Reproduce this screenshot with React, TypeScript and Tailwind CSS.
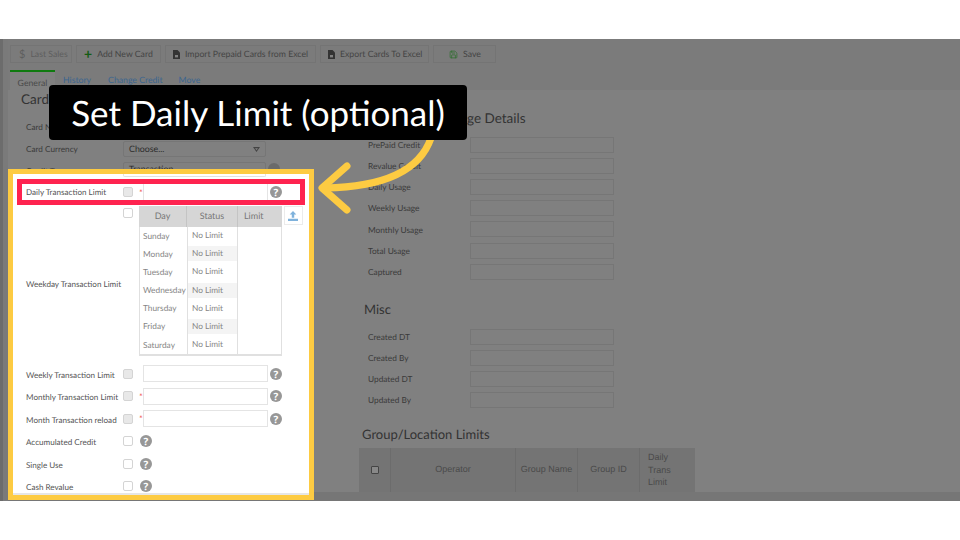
import { Save } from "lucide-react";

const font = "font-['Lato','Noto_Sans',sans-serif] [text-rendering:geometricPrecision]";

function Help({ className = "" }: { className?: string }) {
  return (
    <span className={`flex h-[12px] w-[12px] shrink-0 items-center justify-center rounded-full bg-[#979797] font-['Open_Sans',sans-serif] text-[10px] leading-none font-bold text-white ${className}`}>?</span>
  );
}

function Check({ filled = false }: { filled?: boolean }) {
  return <span className={`block h-[10px] w-[10px] shrink-0 rounded-[2px] border border-[#d4d4d4] ${filled ? "bg-[#e8e8e8]" : "bg-white"}`} />;
}

function ToolButton({ children, width, dim = false }: { children: React.ReactNode; width: string; dim?: boolean }) {
  return (
    <div className={`flex h-[18px] items-center border border-[#747474] text-[8.7px] leading-none whitespace-nowrap ${width} ${dim ? "text-[#5e5e5e]" : "text-[#444]"}`}>{children}</div>
  );
}

function FileIcon() {
  return (
    <svg width="7" height="9" viewBox="0 0 7 9"><path d="M0 0h4.5L7 2.5V9H0z" fill="#333" /><path d="M2 5h3v2.4H2z" fill="#808080" /></svg>
  );
}

function LimitRow({ label, star = false }: { label: string; star?: boolean }) {
  return (
    <div className="flex h-[22.5px] items-center">
      <span className="w-[97px] pt-[2px] text-[8.1px] whitespace-nowrap text-[#555]">{label}</span>
      <Check filled />
      <span className="w-[10px] pl-[6px] text-[9px] leading-none text-[#ef5555]">{star ? "*" : ""}</span>
      <span className="h-[17px] w-[125px] border border-[#e4e4e4] bg-white" />
      <Help className="ml-[2px]" />
    </div>
  );
}

function CheckRow({ label }: { label: string }) {
  return (
    <div className="flex h-[22.5px] items-center">
      <span className="w-[97px] pt-[2px] text-[8.1px] text-[#555]">{label}</span>
      <Check />
      <Help className="ml-[7px]" />
    </div>
  );
}

function DimRow({ label }: { label: string }) {
  return (
    <div className="flex h-[21.2px] items-center pl-[9px]">
      <span className="w-[102px] pt-[1px] text-[8.3px] text-[#3a3a3a]">{label}</span>
      <span className="h-[16px] w-[144px] border border-[#767676]" />
    </div>
  );
}

const days = [
  ["Sunday", false], ["Monday", true], ["Tuesday", false], ["Wednesday", true],
  ["Thursday", false], ["Friday", true], ["Saturday", false],
] as const;

export default function App() {
  return (
    <div className={`relative flex h-[540px] w-[960px] flex-col overflow-hidden bg-white ${font}`}>
      <div className="h-[39px] shrink-0" />
      <div className="relative h-[462px] shrink-0 overflow-hidden bg-[#808080]">
        <div className="bg-[#7b7b7b]">
          <div className="flex gap-[4px] pt-[6px] pl-[10px]">
            <ToolButton width="w-[62px] pl-[8px] gap-[5px]" dim><span className="text-[11px] text-[#5e5e5e]">$</span> Last Sales</ToolButton>
            <ToolButton width="w-[85px] pl-[7px] gap-[5px]"><span className="text-[14px] font-bold text-[#145c14]">+</span> Add New Card</ToolButton>
            <ToolButton width="w-[151px] pl-[7px] gap-[5px]"><FileIcon /> Import Prepaid Cards from Excel</ToolButton>
            <ToolButton width="w-[109px] pl-[7px] gap-[5px]"><FileIcon /> Export Cards To Excel</ToolButton>
            <ToolButton width="w-[63px] pl-[15px] gap-[5px]"><Save size={9} color="#2f6f2f" /> Save</ToolButton>
          </div>

          <div className="mt-[7px] ml-[10px] flex h-[20px] text-[8.7px]">
            <span className="w-[45px] border-t-2 border-[#0f7a0f] bg-[#808080] pt-[4px] text-center text-[#4a4a4a]">General</span>
            <span className="ml-[8px] pt-[3px] text-[#3a6590]">History</span>
            <span className="ml-[17px] pt-[3px] text-[#3a6590]">Change Credit</span>
            <span className="ml-[16px] pt-[3px] text-[#3a6590]">Move</span>
          </div>
        </div>

        <div className="flex">
          <div className="w-[359px] shrink-0">
            <div className="flex h-[18px] items-center pl-[21px] text-[13.5px] text-[#333]">Card</div>
            <div className="mt-[8px] flex h-[22px] items-center pl-[26px] text-[8.2px] text-[#3a3a3a]">Card N</div>
            <div className="flex h-[22px] items-center pl-[26px] text-[8.2px] text-[#3a3a3a]">
              <span className="w-[97px]">Card Currency</span>
              <span className="flex h-[16px] w-[143px] items-center justify-between rounded-[2px] border border-[#767676] pr-[5px] pl-[5px] text-[8.8px] text-[#2c2c2c]">
                Choose...
                <svg width="7" height="5" viewBox="0 0 7 5"><path d="M0 0h7L3.5 5zM2 1.2 3.5 3.2 5 1.2z" fill="#444" fillRule="evenodd" /></svg>
              </span>
            </div>
            <div className="flex h-[9px] items-start overflow-hidden pl-[26px] text-[8.2px] text-[#3a3a3a]">
              <span className="w-[97px] pt-[5px]">Credit Type</span>
              <span className="mt-[2px] h-[16px] w-[143px] rounded-[2px] border border-[#767676] pl-[5px] text-[8.8px] leading-[12px] text-[#2c2c2c]">Transaction</span>
              <span className="mt-[3px] ml-[2px] h-[12px] w-[12px] rounded-full bg-[#6a6a6a]" />
            </div>

            <div className="relative z-10 ml-[8px] h-[331px] w-[306px] border-[5px] border-[#fdcb42] bg-white">
              <div className="h-full overflow-hidden border-b-2 border-[#e6e6e6]">
                <div className="flex h-[5px] items-start pl-[110px]">
                  <span className="h-[3px] w-[143px] rounded-b-[2px] border-x border-b border-[#e2e2e2]" />
                </div>
                <div className="ml-[4px] flex h-[26px] w-[288px] items-center border-[5px] border-[#fe234f] pl-[4px]">
                  <span className="w-[97px] pt-[1px] text-[8.1px] whitespace-nowrap text-[#555]">Daily Transaction Limit</span>
                  <Check filled />
                  <span className="w-[10px] pl-[6px] text-[9px] leading-none text-[#ef5555]">*</span>
                  <span className="h-[16px] w-[125px] border-x border-[#e4e4e4]" />
                  <Help className="ml-[2px]" />
                </div>

                <div className="flex h-[157.5px] pl-[13px]">
                  <span className="flex h-[156px] w-[97px] items-center pt-[3px] text-[8.1px] whitespace-nowrap text-[#555]">Weekday Transaction Limit</span>
                  <div className="pt-[3px]"><Check /></div>
                  <div className="ml-[6px] w-[142.5px] pt-[1px]">
                    <div className="flex h-[20.5px] bg-[#d6d6d6] text-[9px] leading-[20px] text-[#777]">
                      <span className="w-[48px] border-r border-[#c4c4c4] text-center">Day</span>
                      <span className="w-[51px] border-r border-[#c4c4c4] text-center">Status</span>
                      <span className="flex-1 pl-[6px]">Limit</span>
                    </div>
                    <div className="border-x border-b-2 border-[#e0e0e0]">
                      {days.map(([d, alt]) => (
                        <div key={d} className="flex h-[18.2px] items-center text-[8.3px] text-[#858585]">
                          <span className="h-full w-[47px] pl-[3px] leading-[18px] whitespace-nowrap">{d}</span>
                          <div className="flex h-full w-[51px] items-center border-x border-[#e0e0e0]">
                            <span className={`h-[15px] w-full pl-[4px] leading-[15px] ${alt ? "bg-[#f4f4f4]" : ""}`}>No Limit</span>
                          </div>
                        </div>
                      ))}
                    </div>
                  </div>
                  <div className="ml-[2px] pt-[1px]">
                    <span className="flex h-[19px] w-[19px] items-center justify-center border border-[#ebebeb]">
                      <svg width="10" height="10" viewBox="0 0 9 9"><path d="M4.5 0 7.5 3.2H5.6V6H3.4V3.2H1.5z M0 7h9v2H0z" fill="#7fb2dc" /></svg>
                    </span>
                  </div>
                </div>

                <div className="pl-[13px]">
                  <LimitRow label="Weekly Transaction Limit" />
                  <LimitRow label="Monthly Transaction Limit" star />
                  <LimitRow label="Month Transaction reload" star />
                  <CheckRow label="Accumulated Credit" />
                  <CheckRow label="Single Use" />
                  <CheckRow label="Cash Revalue" />
                </div>
              </div>
            </div>
          </div>

          <div className="w-[340px]">
            <div className="mt-[18px] flex h-[20px] items-center pl-[108px] text-[13.5px] text-[#333]">ge Details</div>
            <div className="mt-[6px]">
              {["PrePaid Credit", "Revalue Credit", "Daily Usage", "Weekly Usage", "Monthly Usage", "Total Usage", "Captured"].map((l) => <DimRow key={l} label={l} />)}
            </div>
            <div className="mt-[17.6px] flex h-[20px] items-center pl-[5px] text-[13px] text-[#333]">Misc</div>
            <div className="mt-[6px]">
              {["Created DT", "Created By", "Updated DT", "Updated By"].map((l) => <DimRow key={l} label={l} />)}
            </div>
            <div className="mt-[14px] flex h-[20px] items-center pl-[3px] text-[13px] text-[#333]">Group/Location Limits</div>
            <div className="mt-[3px] flex h-[44px] w-[336px] items-center bg-[#747474] font-['Liberation_Sans',sans-serif] text-[9px] text-[#4a4a4a]">
              <span className="flex h-full w-[32px] items-center justify-center border-r border-[#6c6c6c]"><span className="h-[8px] w-[8px] rounded-[1px] border border-[#444] bg-[#888]" /></span>
              <span className="flex h-full w-[125px] items-center justify-center border-r border-[#6c6c6c]">Operator</span>
              <span className="flex h-full w-[62px] items-center justify-center border-r border-[#6c6c6c]">Group Name</span>
              <span className="flex h-full w-[62px] items-center justify-center border-r border-[#6c6c6c]">Group ID</span>
              <span className="pl-[8px] leading-[12.3px]">Daily<br />Trans<br />Limit</span>
            </div>
          </div>
        </div>

        <div className="absolute right-0 bottom-0 left-0 h-[9px] bg-[#767676]" />
        <div className="absolute top-0 bottom-0 left-0 w-[8px] border-l-[3px] border-[#6c6c6c] bg-[#7a7a7a]" />
      </div>

      <svg className="absolute top-[130px] left-[315px] z-20" width="130" height="85" viewBox="0 0 130 85" fill="none">
        <path d="M116 8C105 40 70 57 10 58" stroke="#fdcb42" strokeWidth="7" strokeLinecap="round" />
        <path d="M32 36 7 58 32 80" stroke="#fdcb42" strokeWidth="7" strokeLinecap="round" strokeLinejoin="round" />
      </svg>

      <div className="absolute top-[85px] left-[49px] z-20 flex h-[55px] w-[418px] items-center justify-center rounded-[4px] bg-black pt-[2px] text-[35px] text-white">Set Daily Limit (optional)</div>
    </div>
  );
}
